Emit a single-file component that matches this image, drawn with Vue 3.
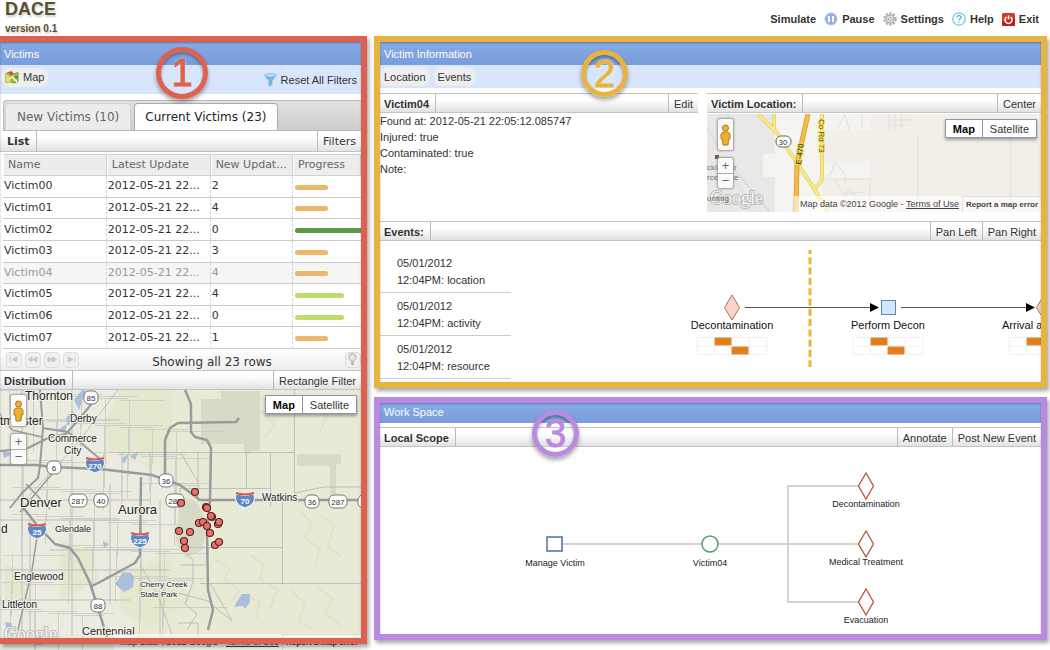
<script setup>
const columns = ['Name', 'Latest Update', 'New Updat...', 'Progress']

const victims = [
  { name: 'Victim00', updated: '2012-05-21 22...', count: 2, progress: 50 },
  { name: 'Victim01', updated: '2012-05-21 22...', count: 4, progress: 50 },
  { name: 'Victim02', updated: '2012-05-21 22...', count: 0, progress: 100 },
  { name: 'Victim03', updated: '2012-05-21 22...', count: 3, progress: 50 },
  { name: 'Victim04', updated: '2012-05-21 22...', count: 4, progress: 50, selected: true },
  { name: 'Victim05', updated: '2012-05-21 22...', count: 4, progress: 75 },
  { name: 'Victim06', updated: '2012-05-21 22...', count: 0, progress: 75 },
  { name: 'Victim07', updated: '2012-05-21 22...', count: 1, progress: 50 }
]

const level = (value) => (value >= 100 ? 'done' : value >= 75 ? 'high' : 'mid')

const pager = [
  { label: 'First page', path: 'M4 5v5M11 5v5l-5-2.5z' },
  { label: 'Previous page', path: 'M7 5v5L3 7.500zM12 5v5L8 7.500z' },
  { label: 'Next page', path: 'M4 5v5l4-2.500zM8.500 5v5l4-2.500z' },
  { label: 'Last page', path: 'M5 5v5l5-2.500zM12 5v5' }
]

const events = ['location', 'activity', 'resource']

const steps = [
  { x: 221, shape: 'diamond', label: 'Decontamination' },
  { x: 377, shape: 'square', label: 'Perform Decon' },
  { x: 533, shape: 'diamond', label: 'Arrival a' }
]

const outcomes = [
  { y: 38, label: 'Decontamination' },
  { y: 96, label: 'Medical Treatment' },
  { y: 154, label: 'Evacuation' }
]

// Residential street grid: horizontal and vertical segments
const streets = []
for (let i = 0; i < 46; i++) {
  const x = (i * 47) % 176
  const y = (i * 31) % 246
  streets.push(`M${x} ${y + 0.5}h${30 + ((i * 13) % 46)}`)
  streets.push(`M${((x + 9) % 178) + 0.5} ${y}v${24 + ((i * 17) % 50)}`)
}
const streetPath = streets.join('')

const interstates = [
  { x: 95, y: 75, n: '270' },
  { x: 37, y: 141, n: '25' },
  { x: 140, y: 150, n: '225' },
  { x: 245, y: 110, n: '70' }
]
const routes = [
  { x: 91, y: 7, n: '85' },
  { x: 54, y: 77, n: '6' },
  { x: 166, y: 90, n: '36' },
  { x: 78, y: 110, n: '287' },
  { x: 101, y: 110, n: '40' },
  { x: 175, y: 110, n: '287' },
  { x: 98, y: 215, n: '88' },
  { x: 312, y: 111, n: '36' },
  { x: 338, y: 111, n: '287' },
  { x: 365, y: 111, n: '' }
]
const places = [
  { x: 25, y: 10, size: 12, text: 'Thornton' },
  { x: 0, y: 35, size: 12, text: 'tminster' },
  { x: 70, y: 32, size: 10, text: 'Derby' },
  { x: 48, y: 52, size: 10, text: 'Commerce' },
  { x: 64, y: 64, size: 10, text: 'City' },
  { x: 20, y: 117, size: 13, text: 'Denver' },
  { x: 118, y: 124, size: 13, text: 'Aurora' },
  { x: 262, y: 111, size: 10, text: 'Watkins' },
  { x: 1, y: 143, size: 12, text: 'd' },
  { x: 55, y: 142, size: 9, text: 'Glendale' },
  { x: 14, y: 190, size: 10, text: 'Englewood' },
  { x: 2, y: 218, size: 10, text: 'Littleton' },
  { x: 140, y: 197, size: 8, text: 'Cherry Creek' },
  { x: 140, y: 207, size: 8, text: 'State Park' },
  { x: 82, y: 245, size: 11, text: 'Centennial' }
]
const pins = [
  [195, 102], [181, 113], [206, 117], [207, 118], [212, 127], [211, 126],
  [199, 133], [203, 132], [207, 136], [218, 134], [219, 132], [210, 143],
  [190, 142], [179, 141], [184, 151], [185, 158], [215, 155], [219, 152]
]
</script>

<template>
  <div class="page">
    <header class="top">
      <div class="brand">
        <h1>DACE</h1>
        <p>version 0.1</p>
      </div>
      <nav class="menu" aria-label="Application">
        <button type="button">Simulate</button>
        <button type="button">
          <svg width="14" height="14" viewBox="0 0 14 14"><circle cx="7" cy="7" r="6.500" fill="#a9c1f3" /><circle cx="7" cy="7" r="5" fill="#8eaaf0" /><path d="M5 4v6M9 4v6" stroke="#fff" stroke-width="2" /></svg>
          Pause
        </button>
        <button type="button">
          <svg width="14" height="14" viewBox="0 0 14 14"><circle cx="7" cy="7" r="5.500" fill="none" stroke="#b3b3b3" stroke-width="2.500" stroke-dasharray="2.300 1.200" /><circle cx="7" cy="7" r="4" fill="#e2e2e2" stroke="#b0b0b0" stroke-width="1.500" /><circle cx="7" cy="7" r="1.500" fill="#fff" stroke="#a5a5a5" /></svg>
          Settings
        </button>
        <button type="button">
          <svg width="14" height="14" viewBox="0 0 14 14"><circle cx="7" cy="7" r="6.200" fill="#fff" stroke="#74c8e8" stroke-width="1.300" /><path d="M5 5.500c0-2.600 4-2.400 4-.2C9 6.800 7 6.800 7 8.500M7 9.700v1.300" fill="none" stroke="#48b4dd" stroke-width="1.300" /></svg>
          Help
        </button>
        <button type="button">
          <svg width="13" height="13" viewBox="0 0 13 13"><rect width="13" height="13" rx="1.500" fill="#cc3c35" /><path d="M0 9 13 5v6.500a1.500 1.500 0 0 1-1.500 1.500h-10A1.500 1.500 0 0 1 0 11.500z" fill="#b3221e" /><path d="M4.300 4.200a3.500 3.500 0 1 0 4.400 0M6.500 2.500v4" fill="none" stroke="#fff" stroke-width="1.500" /></svg>
          Exit
        </button>
      </nav>
    </header>

    <main class="columns">
      <section class="panel victims">
        <h2 class="title">Victims</h2>
        <div class="tools tall">
          <button type="button" class="pill">
            <svg width="14" height="14" viewBox="0 0 14 14"><path d="M1 3.500 5 2l4 2 4-1.500v9L9 13l-4-1.500L1 13z" fill="#a5c93e" stroke="#6b9131" /><path d="M1 4l4 3v5L1 13z" fill="#e8df62" /><path d="M4 9l4-2 4 5" fill="none" stroke="#fff" stroke-width="1.300" /><circle cx="6" cy="3.300" r="2" fill="#d64a36" /><circle cx="11" cy="7" r="1.600" fill="#548b36" /></svg>
            Map
          </button>
          <button type="button" class="reset">
            <svg width="13" height="14" viewBox="0 0 13 14"><path d="M.8 2.500 5 7.500V13l3-1.500v-4l4.200-5z" fill="#7db9df" stroke="#6da8d3" stroke-width=".8" /><ellipse cx="6.500" cy="2.400" rx="5.800" ry="1.700" fill="#c3e2f3" stroke="#72b0d8" stroke-width=".8" /></svg>
            Reset All Filters
          </button>
        </div>

        <div class="tabs" role="tablist">
          <button type="button" role="tab" aria-selected="false" class="tab">New Victims (10)</button>
          <button type="button" role="tab" aria-selected="true" class="tab active">Current Victims (23)</button>
        </div>

        <div class="bar wide">
          <h3>List</h3>
          <button type="button">Filters</button>
        </div>

        <table class="grid">
          <colgroup><col class="c1" /><col class="c2" /><col class="c3" /><col /></colgroup>
          <thead>
            <tr><th v-for="c in columns" :key="c" scope="col">{{ c }}</th></tr>
          </thead>
          <tbody>
            <tr v-for="v in victims" :key="v.name" :class="{ selected: v.selected }">
              <td>{{ v.name }}</td>
              <td>{{ v.updated }}</td>
              <td>{{ v.count }}</td>
              <td><div class="meter" :class="level(v.progress)" :style="{ width: v.progress + '%' }"></div></td>
            </tr>
          </tbody>
        </table>

        <div class="pager">
          <div class="pages">
            <button v-for="p in pager" :key="p.label" type="button" :aria-label="p.label">
              <svg width="15" height="15" viewBox="0 0 15 15"><path :d="p.path" fill="#c9c9c9" stroke="#c9c9c9" /></svg>
            </button>
          </div>
          <span>Showing all 23 rows</span>
          <button type="button" aria-label="Hints">
            <svg width="15" height="15" viewBox="0 0 15 15"><path d="M6 9.500c0-2-2-2-2-4.300a3.500 3.500 0 0 1 7 0c0 2.300-2 2.300-2 4.300z" fill="#e6e6e6" stroke="#aaa" /><path d="M6 11h3M6.500 12.500h2" stroke="#999" stroke-width="1.200" /></svg>
          </button>
        </div>

        <div class="bar">
          <h3>Distribution</h3>
          <button type="button">Rectangle Filter</button>
        </div>

        <div class="map terrain">
          <svg class="canvas" aria-label="Distribution map">
            <rect width="100%" height="100%" fill="#e8ead5" />
            <path d="M0 0H118L108 62l70 28v60l-40 30-10 90H0z" fill="#ecebe0" />
            <path d="M120 0h52v62h-62l-5-30zM60 150l30 10 10 30-40 20zM120 180l50-10 20 40-40 30-30-20zM5 175l30 5-5 30H5z" fill="#e4e8cd" />
            <path d="M201 9h20v-8h39v60h-10v3h-6v-10h-43zM297 64h44v10h-5v41h-6V76h-33zM180 110q22-8 26 30l-4 20-16 8-10-18z" fill="#d8dac8" />
            <g fill="none" stroke="#e0e3cb" stroke-width="2">
              <path d="M215 170l15 8-6 12 16 10-9 12M250 165l14 9-4 16 18 10-8 18M300 120l12 14-8 14 16 10-5 18M320 125l14 10-6 22 14 10M240 205l20 6-4 18M290 200l15 14-6 18 14 8M315 195l18 14-8 14 18 14M260 20l15 15-10 12M310 10l18 12-9 22" />
            </g>
            <path :d="streetPath" fill="none" stroke="#cfd1c9" />
            <g fill="none" stroke="#bdbfc0" stroke-width="1">
              <path d="M110 62.500h184M294.500 62V0M246.500 62v36M270.500 62v55M294.500 62v41M294 103l30-6h50M180 98.500h90M180 98v16M282.500 112v81M180 157.500h102M200 193.500h180M0 30h120M22 0v246M72 0v246M0 180h170M0 210h130M118 0 72 60 25 110M110 94v120M160 110v136M122 62v60M180 62l18 30M198 62v50M140 175l18 30 14 40M178 155l15 15v22l-8 22 12 10-10 16M210 193l22 38M180 175h28M178 203l30 8 14 12 10 8M178 233h20v13M150 62v40M0 110h150M0 130h120M50 160h90M30 130v116" />
            </g>
            <g fill="#a9bfdc">
              <path d="M74 10l8-10h4l-7 20zM66 28l6-7 4 3-8 12zM58 40l9-6-2 8zM118 190l5-8 8 1 3 4-1 10-9 5-9-8zM236 213l6-9h8v8l-5 7-2-3-9 1zM122 68l7-4-5 10zM2 60l12 3-10 5zM130 66l8-4-3 8zM103 151l6 3-5 4zM5 232l7 1-4 12z" />
            </g>
            <g fill="none" stroke="#999b9c" stroke-width="2.500" stroke-linejoin="round">
              <path d="M40 0 43 38 40 76 38 88 22 103 10 118M0 61l28-3 20-10 18-4 14-16 18-22M42 38l26 4 32 27" stroke-width="2" />
              <path d="M0 75h36l16 2 48 2 52 6 28 10 20 15h180" />
              <path d="M165 90V50l5-12 8-5 58-1 3-4" />
              <path d="M185 0l6 14v28l4 5 12 3 4 8-1 52-3 30 1 60 5 20-5 20" />
              <path d="M141 87l-1 78-5 8-35 19-8 4M22 116l14 18 19 20 15 4 8 10 12 25 7 22 10 32" />
              <path d="M20 122l32-38M26 94l24 25M38 140l-6 40-14 60M0 24l12 16 30 7" stroke-width="1.500" />
            </g>

            <g v-for="s in interstates" :key="s.n">
              <path :d="`M${s.x - 9} ${s.y - 6}q9 3 18 0q3 10-9 14q-12-4-9-14z`" fill="#5d87c9" stroke="#fff" />
              <path :d="`M${s.x - 9} ${s.y - 7}q9 3 18 0`" fill="none" stroke="#d25a50" stroke-width="2" />
              <text :x="s.x" :y="s.y + 4" class="shield inter">{{ s.n }}</text>
            </g>
            <g v-for="(s, i) in routes" :key="i">
              <rect :x="s.x - (s.n.length > 2 ? 9 : 7)" :y="s.y - 6" :width="s.n.length > 2 ? 18 : 14" height="13" rx="5" fill="#fff" stroke="#777" />
              <text :x="s.x" :y="s.y + 4" class="shield">{{ s.n }}</text>
            </g>
            <text v-for="p in places" :key="p.text" :x="p.x" :y="p.y" :font-size="p.size" class="place">{{ p.text }}</text>
            <circle v-for="(p, i) in pins" :key="'pin' + i" :cx="p[0]" :cy="p[1]" r="3.500" fill="#ea706c" stroke="#5c2522" stroke-width="1.200" />
            <text x="4" y="250" class="logo">Google</text>
          </svg>
          <div class="pegman"><svg width="11" height="22" viewBox="0 0 11 22"><path d="M3 8h5l2 2v5H8.500L8 21H3l-.5-6H1v-5z" fill="#eeb02f" stroke="#b67b1c" /><circle cx="5.500" cy="4" r="3" fill="#eeb02f" stroke="#b67b1c" /></svg></div>
          <div class="zoom"><button type="button" aria-label="Zoom in">+</button><button type="button" aria-label="Zoom out">−</button></div>
          <div class="kind"><button type="button" class="on">Map</button><button type="button">Satellite</button></div>
          <div class="credit"><span>Map data ©2012 Google - <a href="#terms">Terms of Use</a></span><a href="#report" class="report">Report a map error</a></div>
        </div>
        <div class="frame"></div>
        <div class="badge one">1</div>
      </section>

      <div class="side">
        <section class="panel info">
          <h2 class="title">Victim Information</h2>
          <div class="tools">
            <button type="button" class="pill">Location</button>
            <button type="button" class="pill">Events</button>
          </div>
          <div class="pair">
            <div>
              <div class="bar"><h3>Victim04</h3><button type="button">Edit</button></div>
              <p class="facts">Found at: 2012-05-21 22:05:12.085747<br />Injured: true<br />Contaminated: true<br />Note:</p>
            </div>
            <div>
              <div class="bar"><h3>Victim Location:</h3><button type="button">Center</button></div>
              <div class="map small">
                <svg class="canvas" aria-label="Victim location map">
                  <rect width="100%" height="100%" fill="#f2efe9" />
                  <path d="M0 0h69v98H0z" fill="#e9e8e6" />
                  <path d="M56 40h12v23H56zM68 0h47v98H68zM117 0h47v16h-47zM117 47h46v18h-46z" fill="#f5f4f1" />
                  <path d="M130 16l8-16M138 0l4 16M155 0v14M182 0v16M188 0v16M194 0v16M181 6h24M181 11h18M122 64l6-16 10 12v8M117 65h46v33M128 66l8 14 20-2M132 98l10-24 14 24M211 20v78M304 22v76M0 15 14 36M46 98 18 46 0 14" fill="none" stroke="#e2ded9" />
                  <path d="M20 0l3 5M18 45 63 98" fill="none" stroke="#c9cdd5" />
                  <g fill="none" stroke-linejoin="round">
                    <path d="M51 0 70 19 106 73 121 98M67 0v15M115 0v64q0 5-9 11" stroke="#e2cf68" stroke-width="4" />
                    <path d="M51 0 70 19 106 73 121 98M67 0v15M115 0v64q0 5-9 11" stroke="#f8ea83" stroke-width="2.500" />
                    <path d="M101 0 90 49 89 98" stroke="#d49a2c" stroke-width="5" />
                    <path d="M101 0 90 49 89 98" stroke="#f3bc42" stroke-width="3.500" />
                  </g>
                  <rect x="69" y="22" width="15" height="11" rx="5" fill="#fff" stroke="#666" />
                  <text x="76" y="31" class="shield">30</text>
                  <text transform="translate(94 51) rotate(-82)" class="road bold">E-470</text>
                  <text transform="translate(112 5) rotate(90)" class="road">Co Rd 73</text>
                  <path d="M8 41h4v4H8z" fill="#6c5b4a" />
                  <text x="0" y="56" class="poi">ckley Air</text>
                  <text x="0" y="66" class="poi">rce Base</text>
                  <text x="3" y="90" class="logo">Google</text>
                  <text x="0" y="87" class="poi">unting</text>
                </svg>
                <div class="pegman"><svg width="11" height="22" viewBox="0 0 11 22"><path d="M3 8h5l2 2v5H8.500L8 21H3l-.5-6H1v-5z" fill="#eeb02f" stroke="#b67b1c" /><circle cx="5.500" cy="4" r="3" fill="#eeb02f" stroke="#b67b1c" /></svg></div>
                <div class="zoom"><button type="button" aria-label="Zoom in">+</button><button type="button" aria-label="Zoom out">−</button></div>
                <div class="kind"><button type="button" class="on">Map</button><button type="button">Satellite</button></div>
                <div class="credit"><span>Map data ©2012 Google - <a href="#terms">Terms of Use</a></span><a href="#report" class="report">Report a map error</a></div>
              </div>
            </div>
          </div>
          <div class="bar">
            <h3>Events:</h3>
            <button type="button">Pan Left</button>
            <button type="button">Pan Right</button>
          </div>
          <div class="events">
            <ul>
              <li v-for="e in events" :key="e">05/01/2012<br />12:04PM: {{ e }}</li>
            </ul>
            <svg class="timeline" aria-label="Event timeline">
              <path d="M234 66.500h126M390 66.500h126" stroke="#555" />
              <path d="M359 62v9l9-4.500zM515 62v9l9-4.500z" fill="#000" />
              <path d="M299 9v117" stroke="#edb637" stroke-width="3" stroke-dasharray="7 3.300" stroke-dashoffset="3" />
              <g v-for="s in steps" :key="s.x">
                <path v-if="s.shape === 'diamond'" :d="`M${s.x} 54l7.500 12.500-7.500 12.500-7.500-12.500z`" fill="#f5d5cb" stroke="#c0694c" />
                <rect v-else :x="s.x - 6.5" y="59.500" width="14" height="14" fill="#d3e6fd" stroke="#5e88b5" />
                <text :x="s.x - (s.label === 'Arrival a' ? 42 : 0)" y="88" :text-anchor="s.label === 'Arrival a' ? 'start' : 'middle'" class="step">{{ s.label }}</text>
                <path :d="`M${s.x - 35} 96.500h70v17h-70zM${s.x - 35} 105h70M${s.x - 17.500} 96v18M${s.x} 96v18M${s.x + 17.500} 96v18`" fill="#fff" stroke="#efefef" />
                <path :d="`M${s.x - 17} 97h16v7h-16zM${s.x} 106h16v7h-16z`" fill="#e37d1a" stroke="#dd8a3b" />
              </g>
            </svg>
          </div>
          <div class="frame"></div>
          <div class="badge two">2</div>
        </section>

        <section class="panel work">
          <h2 class="title">Work Space</h2>
          <div class="bar">
            <h3>Local Scope</h3>
            <button type="button">Annotate</button>
            <button type="button">Post New Event</button>
          </div>
          <svg class="scope" aria-label="Local scope diagram">
            <path d="M182 97h140M338 97h140M408 39h70M408 155h70M408 38v118" fill="none" stroke="#d4d4d4" stroke-width="2" />
            <rect x="167" y="90" width="15" height="14" fill="#fff" stroke="#4c719f" stroke-width="1.500" />
            <text x="175" y="119" class="node">Manage Victim</text>
            <circle cx="330" cy="97" r="8" fill="#fff" stroke="#569a67" stroke-width="1.500" />
            <text x="330" y="119" class="node">Victim04</text>
            <g v-for="o in outcomes" :key="o.label">
              <path :d="`M486 ${o.y - 12}l7.500 13-7.500 13-7.500-13z`" fill="#fff" stroke="#ba5430" stroke-width="1.300" />
              <text x="486" :y="o.y + 22" class="node">{{ o.label }}</text>
            </g>
          </svg>
          <div class="frame"></div>
          <div class="badge three">3</div>
        </section>
      </div>
    </main>
  </div>
</template>

<style>
body {
  margin: 0;
  background: #fff;
}
</style>

<style scoped>
.page {
  display: flex;
  flex-direction: column;
  height: 100vh;
  min-height: 640px;
  overflow: hidden;
  color: #333;
  font: 11px/16px "Liberation Sans", Arial, sans-serif;
}
.page * {
  box-sizing: border-box;
}
button {
  margin: 0;
  padding: 0;
  border: 0;
  background: none;
  color: inherit;
  font: inherit;
  white-space: nowrap;
  cursor: pointer;
}
h1, h2, h3, p, ul {
  margin: 0;
  padding: 0;
}
svg {
  display: block;
  flex: none;
}
.top {
  display: flex;
  justify-content: space-between;
  height: 36px;
  flex: none;
  padding: 0 11px 0 5px;
}
.brand {
  color: #55502f;
  text-shadow: 1px 2px 2px #ccc;
}
.brand h1 {
  font-size: 18px;
  line-height: 20px;
  margin-top: -1px;
}
.brand p {
  padding-top: 2px;
  font-size: 10px;
  font-weight: bold;
  line-height: 16px;
}
.menu {
  display: flex;
  gap: 8px;
  align-items: center;
  padding-top: 2px;
  font-weight: bold;
}
.menu button {
  display: flex;
  gap: 4px;
  align-items: center;
}
.columns {
  display: grid;
  grid-template-columns: 367fr 673fr;
  gap: 7px;
  flex: 1;
  min-height: 0;
  padding-right: 3px;
}
.panel {
  position: relative;
  display: flex;
  flex-direction: column;
  min-width: 0;
  min-height: 0;
  padding: 6px;
}
.victims {
  --accent: #dc614f;
  padding: 6px 6px 0 0;
}
.info {
  --accent: #e8b441;
}
.work {
  --accent: #b88ae0;
  flex: 1;
}
.side {
  display: flex;
  flex-direction: column;
  gap: 9px;
  min-width: 0;
  min-height: 0;
  padding-bottom: 10px;
}
.frame {
  position: absolute;
  inset: 0;
  border: 6px solid var(--accent);
  box-shadow: 2px 3px 4px rgba(0, 0, 0, 0.35), inset 0 1px 2px rgba(0, 0, 0, 0.3);
  pointer-events: none;
}
.victims .frame {
  bottom: 6px;
  border-left: 0;
}
.badge {
  position: absolute;
  display: grid;
  place-items: center;
  width: 47px;
  height: 47px;
  border: 5px solid var(--accent);
  border-radius: 50%;
  color: var(--accent);
  font-size: 38px;
  line-height: 36px;
  -webkit-text-stroke: 1px var(--accent);
  text-shadow: 0 0 2px #fff;
  box-shadow: 0 3px 4px rgba(0, 0, 0, 0.35), inset 0 2px 3px rgba(0, 0, 0, 0.35);
  pointer-events: none;
}
.one {
  top: 11px;
  left: 156px;
  width: 52px;
  height: 52px;
}
.two {
  top: 14px;
  left: 207px;
}
.three {
  top: 13px;
  left: 158px;
}
.title {
  flex: none;
  height: 23px;
  padding: 0 4px;
  background: linear-gradient(#86abe8, #799dd8);
  color: #fff;
  font-size: 11px;
  font-weight: normal;
  line-height: 24px;
}
.work .title {
  height: 20px;
  margin-bottom: 4px;
  line-height: 18px;
}
.tools {
  display: flex;
  flex: none;
  gap: 4px;
  align-items: center;
  height: 23px;
  margin-bottom: 5px;
  background: #d8e6fd;
}
.tools.tall {
  justify-content: space-between;
  height: 29px;
  margin-bottom: 6px;
  padding: 0 4px 0 1px;
}
.pill, .reset {
  display: flex;
  gap: 4px;
  align-items: center;
  height: 19px;
  padding: 0 4px;
  border-radius: 8px;
  background: #eeeeef;
}
.tall .pill {
  margin-bottom: 5px;
}
.reset {
  padding: 0;
  background: none;
}
.tabs {
  display: flex;
  flex: none;
  gap: 3px;
  align-items: flex-end;
  height: 31px;
  margin-left: 3px;
  padding-left: 1px;
  border: 1px solid #b9b9b9;
  border-width: 1px 0 1px 1px;
  border-radius: 4px 0 0 0;
  background: linear-gradient(#e2e2e2, #cdcdcd);
  font-family: "DejaVu Sans", Verdana, sans-serif;
}
.tab {
  height: 27px;
  padding: 0 11px;
  border: 1px solid #d2d2d2;
  border-bottom: 0;
  border-radius: 4px 4px 0 0;
  background: #ececec;
  color: #666;
  font-size: 12px;
}
.tab.active {
  padding: 0 10px;
  border-color: #aaa;
  background: #fff;
  color: #222;
}
.bar {
  display: flex;
  flex: none;
  height: 20px;
  border: 1px solid #c4c4c4;
  border-width: 1px 0;
  background: linear-gradient(#fff 30%, #e2e2e2);
  line-height: 20px;
}
.bar h3 {
  margin-right: auto;
  padding: 0 6px 0 4px;
  border-right: 1px solid #bbb;
  font-size: 11px;
}
.bar button {
  padding: 0 5px;
  border-left: 1px solid #bbb;
}
.bar.wide {
  height: 21px;
  margin-bottom: 2px;
  padding-left: 3px;
  border-top: 0;
  font-family: "DejaVu Sans", Verdana, sans-serif;
  line-height: 22px;
}
.grid {
  flex: none;
  width: calc(100% - 3px);
  height: 195px;
  margin-left: 3px;
  border-spacing: 0;
  table-layout: fixed;
  font: 11px/16px "DejaVu Sans", Verdana, sans-serif;
}
.c1 {
  width: 29%;
}
.c2 {
  width: 29%;
}
.c3 {
  width: 23%;
}
.grid th {
  height: 22px;
  padding: 0 0 0 4px;
  border: 1px solid #d0d0d0;
  border-left-color: #fff;
  background: #ededed;
  color: #666;
  font-weight: normal;
  text-align: left;
}
.grid th, .grid td {
  overflow: hidden;
  white-space: nowrap;
}
.grid td {
  padding: 0 0 0 1px;
  border-right: 1px dashed #d5d5d5;
  border-bottom: 1px solid #ccc;
}
.grid td:last-child {
  padding: 0 0 0 2px;
  border-right: 0;
}
.selected td {
  background: #f5f5f5;
  color: #999;
}
.meter {
  height: 5px;
  margin-top: 2px;
  border-radius: 3px;
}
.mid {
  background: #ecb66b;
}
.high {
  background: #bfdc6c;
}
.done {
  border-radius: 3px 0 0 3px;
  background: #5a9a46;
}
.pager {
  display: flex;
  flex: none;
  align-items: center;
  justify-content: space-between;
  height: 21px;
  padding-left: 6px;
  background: linear-gradient(#fff, #eceef0);
  font: 12px/16px "DejaVu Sans", Verdana, sans-serif;
}
.pager span {
  padding-top: 5px;
}
.pages {
  display: flex;
  gap: 3px;
}
.pager button {
  width: 16px;
  height: 16px;
  border: 1px solid #ddd;
  border-radius: 4px;
  background: #f0f0f0;
}
.pager svg {
  margin: -1px;
}
.map {
  position: relative;
  overflow: hidden;
}
.terrain {
  flex: 1;
  min-height: 0;
}
.small {
  height: 98px;
  margin-top: 1px;
}
.canvas {
  position: absolute;
  inset: 0;
  width: 100%;
  height: 100%;
}
.place {
  fill: #222;
  stroke: #f4f4ec;
  stroke-width: 2px;
  paint-order: stroke;
}
.shield {
  fill: #333;
  font-size: 8px;
  text-anchor: middle;
}
.inter {
  fill: #fff;
  font-weight: bold;
}
.road {
  fill: #5d4c10;
  stroke: #f7e36d;
  stroke-width: 2px;
  paint-order: stroke;
  font-size: 8px;
}
.bold {
  font-weight: bold;
}
.poi {
  fill: #776c66;
  font-size: 8px;
}
.logo {
  fill: #f6f6f2;
  stroke: #bbb;
  stroke-width: 2px;
  paint-order: stroke;
  font: 18px "Liberation Serif", serif;
}
.pegman {
  position: absolute;
  top: 5px;
  left: 11px;
  display: grid;
  place-items: center;
  width: 15px;
  height: 31px;
  border-radius: 2px;
  background: #fafafa;
  box-shadow: 0 0 2px 1px #999;
}
.zoom {
  position: absolute;
  top: 44px;
  left: 11px;
  width: 15px;
  border-radius: 2px;
  background: #fafafa;
  box-shadow: 0 0 2px 1px #999;
}
.zoom button {
  display: block;
  width: 100%;
  height: 15px;
  color: #666;
  font-size: 13px;
  line-height: 14px;
}
.zoom button + button {
  border-top: 1px solid #aaa;
}
.kind {
  position: absolute;
  top: 5px;
  right: 4px;
  display: flex;
  border: 1px solid #8d95a8;
  background: #fff;
  box-shadow: 0 2px 3px rgba(0, 0, 0, 0.35);
}
.kind button {
  height: 17px;
  padding: 0 7px;
}
.kind button + button {
  border-left: 1px solid #8d95a8;
}
.kind .on {
  color: #000;
  font-weight: bold;
}
.credit {
  position: absolute;
  right: 0;
  bottom: 0;
  display: flex;
  background: rgba(255, 255, 255, 0.6);
  color: #444;
  font-size: 9px;
  white-space: nowrap;
}
.credit a {
  color: inherit;
}
.credit span {
  padding: 0 3px 0 6px;
}
.credit .report {
  padding: 0 3px;
  border: 1px solid #ddd;
  border-width: 1px 0 0 1px;
  font-size: 8px;
  font-weight: bold;
  line-height: 15px;
  text-decoration: none;
}
.pair {
  display: grid;
  grid-template-columns: 318fr 334fr;
  gap: 9px;
  margin-bottom: 9px;
}
.events {
  display: flex;
  height: 141px;
  overflow: hidden;
}
.events ul {
  flex: none;
  width: 131px;
  padding-top: 9px;
  list-style: none;
}
.events li {
  height: 43px;
  padding: 5px 0 0 17px;
  border-bottom: 1px solid #ccc;
  line-height: 17px;
}
.timeline {
  flex: 1;
  min-width: 0;
  height: 100%;
}
.step {
  fill: #111;
  font-size: 11px;
}
.scope {
  flex: 1;
  width: 100%;
  min-height: 0;
}
.node {
  fill: #222;
  font-size: 9px;
  text-anchor: middle;
}
</style>
